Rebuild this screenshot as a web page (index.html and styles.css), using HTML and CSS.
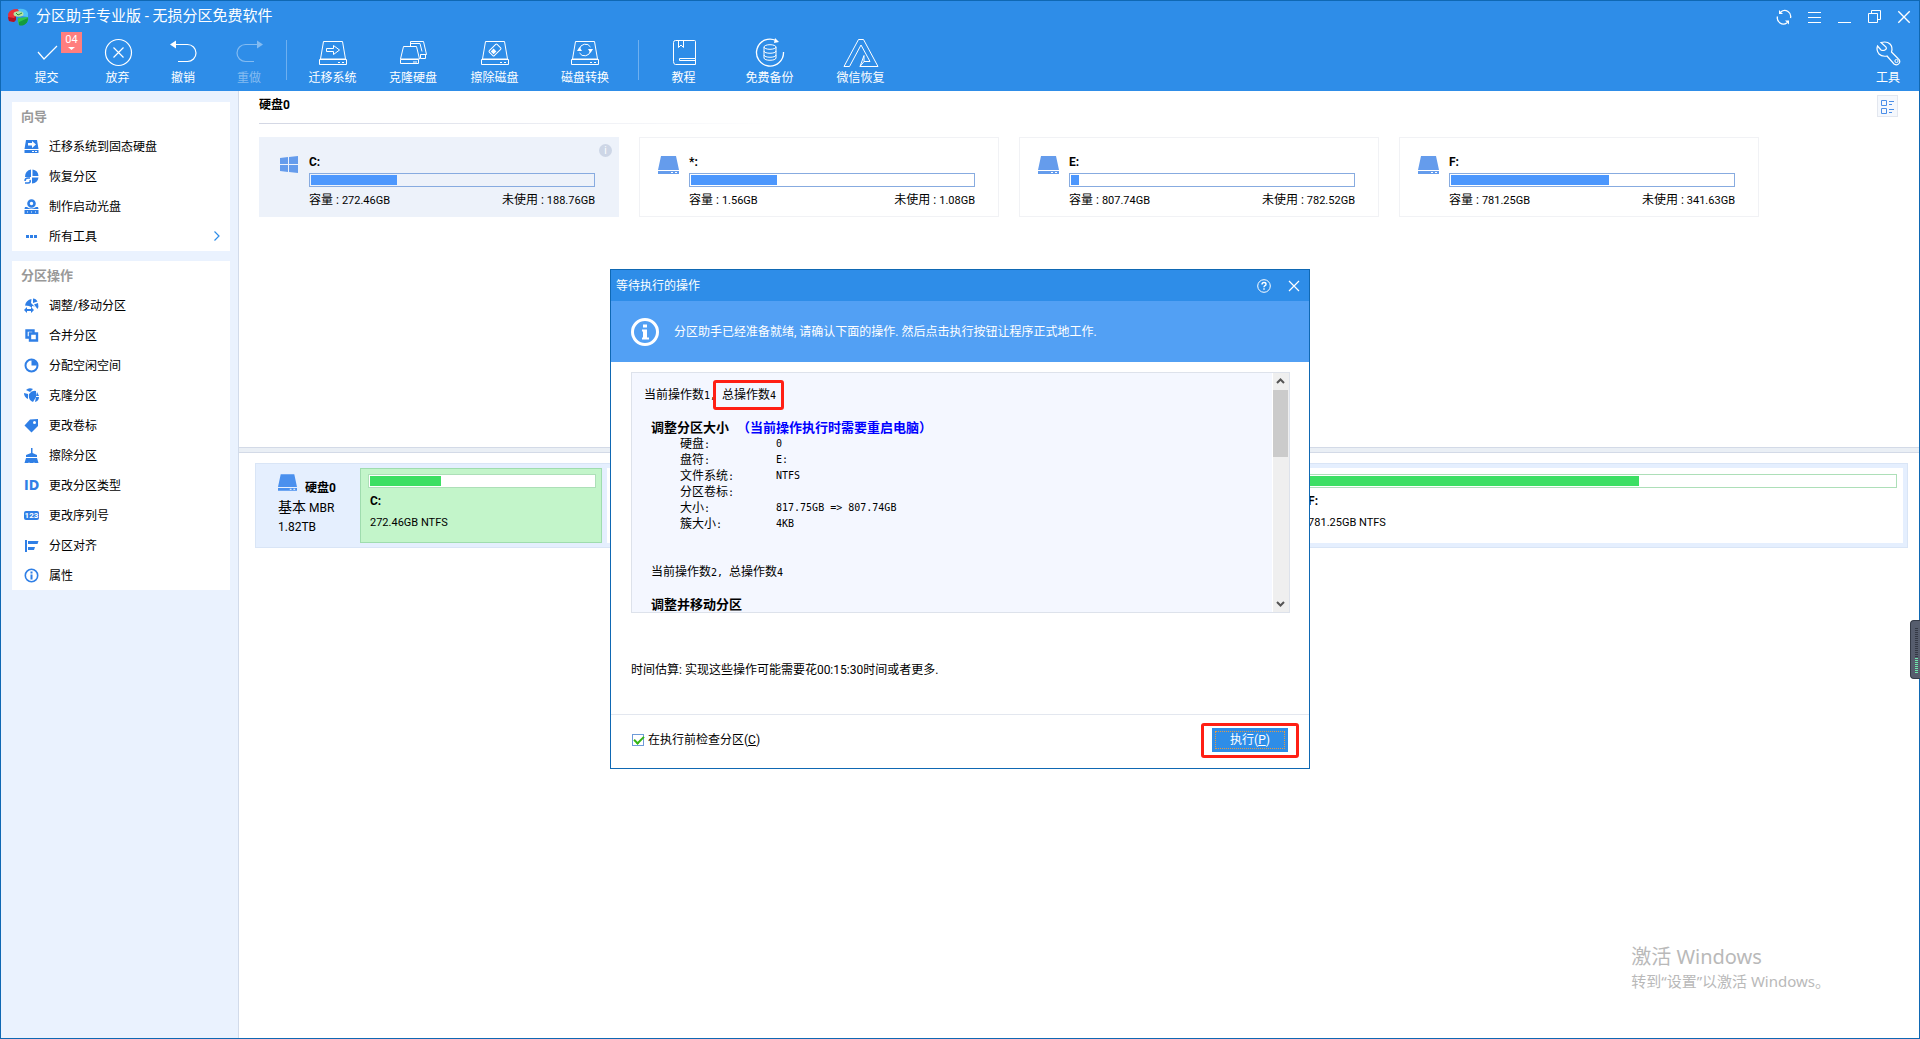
FILE: index.html
```html
<!DOCTYPE html>
<html lang="zh-CN">
<head>
<meta charset="utf-8">
<title>分区助手专业版 - 无损分区免费软件</title>
<link rel="stylesheet" href="styles.css">
</head>
<body>
<svg class="defs" aria-hidden="true">
  <symbol id="disk-line" viewBox="0 0 30 30"><g fill="none" stroke="currentColor"><path d="M5.500 3.500h19l3 17.500h-25zM1.500 21.500h27v5h-27zM20 24.500h2M24 24.500h2"/></g></symbol>
  <symbol id="disk-solid" viewBox="0 0 21 18"><path fill="currentColor" d="M3 0h15l3 14H0zM0 15h21v3H0z"/><path fill="#fff" d="M13 16h2v1h-2zM17 16h2v1h-2z"/></symbol>
  <symbol id="close" viewBox="0 0 14 14"><path d="M2 2l10 10M12 2L2 12" fill="none" stroke="currentColor" stroke-width="1.200"/></symbol>
</svg>
<div class="app">
  <header class="header">
    <div class="titlebar">
      <svg class="logo" viewBox="0 0 21 18"><path d="M0 6q2-5 9-5l3 1-4 3v6l-2 3-5-1q-1-3-1-7z" fill="#e8313a"/><path d="M0 9l6 1 2-2v4l-2 2-5-1z" fill="#b01225"/><path d="M10 1q8-1 10 4v4l-7-1z" fill="#51c3f5"/><path d="M10 10l10-1q1 5-3 7-3 2-6 1-2-4-1-7z" fill="#2fc64c"/><path d="M11 14l9-4q0 5-4 7-3 1-5 0z" fill="#149b3d"/><ellipse cx="10.500" cy="6" rx="5" ry="2.800" fill="#b5e3a0"/><path d="M8 5l2 2 4-2" stroke="#278c35" fill="none"/></svg>
      <h1 class="app-title">分区助手专业版 - 无损分区免费软件</h1>
      <nav class="window-controls">
        <button aria-label="刷新"><svg viewBox="0 0 16 16"><g fill="none" stroke="currentColor" stroke-width="1.300"><path d="M5 2.800a6 6 0 0 1 9.500 6.200M11 13.700A6 6 0 0 1 1.500 7.500"/></g><path fill="currentColor" d="M3 1v4h4zM13 15.500v-4H9z"/></svg></button>
        <button aria-label="菜单"><svg viewBox="0 0 16 16"><path d="M2 3.500h13M2 8.500h13M2 13.500h13" stroke="currentColor"/></svg></button>
        <button aria-label="最小化"><svg viewBox="0 0 16 16"><path d="M2 13.500h13" stroke="currentColor"/></svg></button>
        <button aria-label="还原"><svg viewBox="0 0 16 16"><path d="M2.500 4.500h9v9h-9zM5.500 4V1.500h9v9H12" fill="none" stroke="currentColor"/></svg></button>
        <button aria-label="关闭"><svg viewBox="0 0 14 14"><use href="#close"/></svg></button>
      </nav>
    </div>
    <div class="toolbar">
      <button class="tool"><svg viewBox="0 0 30 30"><path d="M6 14l6 7L25 8" fill="none" stroke="currentColor" stroke-width="1.200"/></svg>提交
        <span class="badge">04<svg viewBox="0 0 7 4"><path d="M0 0h7L3.500 3z" fill="#fff"/></svg></span></button>
      <button class="tool"><svg viewBox="0 0 30 30"><g fill="none" stroke="currentColor" stroke-width="1.200"><circle cx="15.500" cy="14.500" r="13"/><path d="M10.500 9.500l10 10M20.500 9.500l-10 10"/></g></svg>放弃</button>
      <button class="tool"><svg viewBox="0 0 30 30"><path d="M7 6.500h12.500a8.500 8.500 0 0 1 0 17H10" fill="none" stroke="currentColor" stroke-width="1.200"/><path d="M2 6.500l6-4v8z" fill="currentColor"/></svg>撤销</button>
      <button class="tool" disabled><svg viewBox="0 0 30 30"><path d="M24 6.500H11.500a8.500 8.500 0 0 0 0 17H20" fill="none" stroke="currentColor" stroke-width="1.200"/><path d="M29 6.500l-6-4v8z" fill="currentColor"/></svg>重做</button>
      <span class="divider divider-end"></span>
      <button class="tool"><svg viewBox="0 0 30 30"><use href="#disk-line"/><path d="M8.500 10.500h7v-3l6 4.500-6 4.500v-3h-7z" fill="none" stroke="currentColor"/></svg>迁移系统</button>
      <button class="tool"><svg viewBox="0 0 30 30"><g fill="none" stroke="currentColor"><path d="M5.500 8.500h13l3 12.500h-19zM2.500 21.500h18v4h-18zM15 24h4M12.500 8V3.500h13l3 13h-6M22.500 16.500h5v4h-5zM12 5.500h10l2 8"/></g></svg>克隆硬盘</button>
      <button class="tool"><svg viewBox="0 0 30 30"><use href="#disk-line"/><g transform="rotate(-45 15 12)"><rect x="9.500" y="8.500" width="11" height="7" rx="1" fill="none" stroke="currentColor"/><path d="M11 10h4v4h-4z" fill="currentColor"/></g></svg>擦除磁盘</button>
      <button class="tool"><svg viewBox="0 0 30 30"><use href="#disk-line"/><path d="M9.500 11a6 6 0 0 1 11-2M20.500 13a6 6 0 0 1-11 2" fill="none" stroke="currentColor"/><path d="M7 13l2.500-4 2.500 4zM18 11h5l-2.500 4z" fill="currentColor"/></svg>磁盘转换</button>
      <span class="divider"></span>
      <button class="tool"><svg viewBox="0 0 30 30"><path d="M26.500 20.500v-17q0-1-1-1h-19q-2 0-2 2v19q0 3 2 3h20v-6h-16v2h16M9.500 3v6.500l2.500-2.500 2.500 2.500V3" fill="none" stroke="currentColor"/></svg>教程</button>
      <button class="tool"><svg viewBox="0 0 30 30"><g fill="none" stroke="currentColor"><path d="M21 2.500A13.500 13.500 0 1 0 28.500 14" stroke-width="1.300"/><ellipse cx="15" cy="9" rx="6" ry="2.300"/><path d="M9 9v11c0 3 12 3 12 0V9M9 13c0 3 12 3 12 0M9 17c0 3 12 3 12 0"/></g><path d="M20 0l4 4-5 1z" fill="currentColor"/></svg>免费备份</button>
      <button class="tool"><svg viewBox="0 0 36 30" class="wide-icon"><path d="M15.500 1.500h5L35 28.500H17l4-5h6L18 7 6.500 28.500H1zM21 17.500v6h6M17 28.500l4-11" fill="none" stroke="currentColor"/></svg>微信恢复</button>
      <button class="tool tool-end"><svg viewBox="0 0 30 30"><path d="M8 4.500l5 4.500q1 2-1 3t-4 0L4.500 8Q3 12 6 16q3 3 8 2l7 8q3 2 5-.500t-1-5L18.500 14Q20 9 17 6T8 4.500z" fill="none" stroke="currentColor" stroke-width="1.200"/><circle cx="23.500" cy="23" r="1.600" fill="none" stroke="currentColor"/></svg>工具</button>
    </div>
  </header>

  <div class="body">
    <aside class="sidebar">
      <section class="panel">
        <h2>向导</h2>
        <a href="#"><svg viewBox="0 0 15 15"><path fill="currentColor" d="M2 1h11l1.500 9H.500zM.500 11h14v3H.500z"/><path fill="#fff" d="M4 4h4V2l4 3.500L8 9V6.500H4zM8 12h2v1H8zM11 12h2v1h-2z"/></svg>迁移系统到固态硬盘</a>
        <a href="#"><svg viewBox="0 0 15 15"><path fill="currentColor" d="M7 .500V8h-6A7 7 0 0 1 7 .500zM8.500.500a7 7 0 0 1 6 6.500h-6zM14.500 8.500A7 7 0 0 1 8 14.500V8.500z"/><path d="M1 12q0-3 3-3h2M6 11q1 3-2 3H1" fill="none" stroke="currentColor" stroke-width="1.500"/></svg>恢复分区</a>
        <a href="#"><svg viewBox="0 0 15 15"><circle cx="7.500" cy="4.500" r="3" fill="none" stroke="currentColor" stroke-width="2.600"/><path fill="currentColor" d="M1 8h2q4 3 9 0h2l.500 2H.500zM.500 11h14v4H.500z"/><path fill="#fff" d="M3 12.500h1v1H3zM7 12.500h1v1H7zM11 12.500h1v1h-1z"/></svg>制作启动光盘</a>
        <a href="#"><svg viewBox="0 0 15 15"><path fill="currentColor" d="M2 6h3v3H2zM6 6h3v3H6zM10 6h3v3h-3z"/></svg>所有工具<svg class="chevron" viewBox="0 0 6 10"><path d="M.500.500L5 5 .500 9.500" fill="none" stroke="currentColor" stroke-width="1.200"/></svg></a>
      </section>
      <section class="panel">
        <h2>分区操作</h2>
        <a href="#"><svg viewBox="0 0 15 15"><path fill="currentColor" d="M1 7.500Q2 2 7.500 1L7 5l4 4q-1-1-3-1v1.500L5 8zM9 .500q3 0 4.500 3L9 5zM14 5q1 4-.500 6L10 6.500zM0 12l3-3v2h4V9l3 3-3 3v-2H3v2z"/></svg>调整/移动分区</a>
        <a href="#"><svg viewBox="0 0 15 15"><path fill="none" stroke="currentColor" stroke-width="2.400" d="M5 9.500H2.500V2.500h7V5M6 5.500h7v7H6z"/></svg>合并分区</a>
        <a href="#"><svg viewBox="0 0 15 15"><circle cx="7.500" cy="7.500" r="6" fill="none" stroke="currentColor" stroke-width="2"/><path fill="currentColor" d="M7.500 2v5.500H13A6 6 0 0 0 7.500 2z"/></svg>分配空闲空间</a>
        <a href="#"><svg viewBox="0 0 15 15"><path fill="currentColor" d="M2 2q3-3 7-1L6 4zM0 5l4 1v5Q0 9 0 5zM5 6q3-4 7-3v6l-3 5q-5-2-4-8zM13 4l2 4h-3zM12 9h3q0 4-4 5z"/></svg>克隆分区</a>
        <a href="#"><svg viewBox="0 0 15 15"><path fill="currentColor" d="M.500 7.500L6 1.500 14 1v7l-6.500 6.500z"/><circle cx="10.500" cy="4.500" r="1.500" fill="#fff"/></svg>更改卷标</a>
        <a href="#"><svg viewBox="0 0 15 15"><path fill="currentColor" d="M7 0h1.500v5L13 7v2H2V7l5-2zM2 10h11l1.500 5h-4l-.500-1-.500 1h-4l-.500-1-.500 1H.500z"/></svg>擦除分区</a>
        <a href="#"><span class="id-icon">ID</span>更改分区类型</a>
        <a href="#"><span class="num-icon">123</span>更改序列号</a>
        <a href="#"><svg viewBox="0 0 15 15"><path fill="currentColor" d="M1 2h2v12H1zM4 3h10.500l-1 3H4zM4 9h7l-1 3H4z"/></svg>分区对齐</a>
        <a href="#"><svg viewBox="0 0 15 15"><circle cx="7.500" cy="7.500" r="6.200" fill="none" stroke="currentColor" stroke-width="1.600"/><path fill="currentColor" d="M6.500 3.500h2v2h-2zM6.500 6.500h2v5h-2z"/></svg>属性</a>
      </section>
    </aside>

    <main class="main">
      <section class="overview">
        <div class="overview-head">
          <h2>硬盘0</h2>
          <button class="view-toggle" aria-label="视图"><svg viewBox="0 0 15 15"><path d="M1.500 1.500h5v5h-5zM1.500 9.500h5v5h-5z" fill="none" stroke="currentColor"/><path d="M9 2.500h5M9 5.500h3M9 10.500h5M9 13.500h3" stroke="currentColor"/></svg></button>
        </div>
        <div class="volumes">
          <article class="volume selected">
            <svg class="volume-icon" viewBox="0 0 21 18"><path fill="currentColor" d="M2 2l8-1v7H2zM11 1l9-1v8h-9zM2 9h8v7l-8-1zM11 9h9v8l-9-1z"/></svg>
            <div class="volume-info"><h3>C:</h3><div class="bar"><i style="width:86px"></i></div><p><span>容量 : <span class="latin">272.46GB</span></span><span>未使用 : <span class="latin">188.76GB</span></span></p></div>
            <span class="info-dot">i</span>
          </article>
          <article class="volume">
            <svg class="volume-icon"><use href="#disk-solid"/></svg>
            <div class="volume-info"><h3>*:</h3><div class="bar"><i style="width:86px"></i></div><p><span>容量 : <span class="latin">1.56GB</span></span><span>未使用 : <span class="latin">1.08GB</span></span></p></div>
          </article>
          <article class="volume">
            <svg class="volume-icon"><use href="#disk-solid"/></svg>
            <div class="volume-info"><h3>E:</h3><div class="bar"><i style="width:8px"></i></div><p><span>容量 : <span class="latin">807.74GB</span></span><span>未使用 : <span class="latin">782.52GB</span></span></p></div>
          </article>
          <article class="volume">
            <svg class="volume-icon"><use href="#disk-solid"/></svg>
            <div class="volume-info"><h3>F:</h3><div class="bar"><i style="width:158px"></i></div><p><span>容量 : <span class="latin">781.25GB</span></span><span>未使用 : <span class="latin">341.63GB</span></span></p></div>
          </article>
        </div>
      </section>
      <div class="splitter"></div>
      <section class="map">
        <div class="disk-row">
          <div class="disk-info">
            <div class="disk-name"><svg><use href="#disk-solid"/></svg><b>硬盘0</b></div>
            <div><span class="disk-kind">基本</span> MBR</div>
            <div>1.82TB</div>
          </div>
          <div class="partition active"><div class="bar green"><i style="width:71px"></i></div><h3>C:</h3><p>272.46GB NTFS</p></div>
          <div class="partition middle"></div>
          <div class="partition last"><div class="bar green"><i style="width:331px"></i></div><h3>F:</h3><p>781.25GB NTFS</p></div>
        </div>
      </section>
    </main>
  </div>
  <div class="watermark"><strong>激活 Windows</strong><span>转到“设置”以激活 Windows。</span></div>
  <div class="side-meter"><i class="off"></i><i class="on"></i></div>
</div>

<div class="overlay">
  <div class="dialog" role="dialog" aria-labelledby="dialog-title">
    <div class="dialog-title">
      <h2 id="dialog-title">等待执行的操作</h2>
      <button aria-label="帮助"><svg viewBox="0 0 14 14"><circle cx="7" cy="7" r="6.300" fill="none" stroke="currentColor"/><path d="M5 5.500q0-2 2-2t2 1.700q0 1-1 1.500t-1 1.500M7 9.300v1.500" fill="none" stroke="currentColor" stroke-width="1.400"/></svg></button>
      <button aria-label="关闭"><svg viewBox="0 0 14 14"><use href="#close"/></svg></button>
    </div>
    <div class="banner">
      <svg viewBox="0 0 28 28"><circle cx="14" cy="14" r="12.500" fill="none" stroke="#fff" stroke-width="3"/><path fill="#fff" d="M12 6.500h4v3h-4zM11 11.500h5v8h2v2h-7v-2h1v-6h-1z"/></svg>
      <p>分区助手已经准备就绪, 请确认下面的操作. 然后点击执行按钮让程序正式地工作.</p>
    </div>
    <div class="dialog-body">
      <div class="report">
        <div class="report-text">
          <p class="first">当前操作数<span class="mono">1,</span><span class="count marked">总操作数<span class="mono">4</span></span></p>
          <h3>调整分区大小<em>（当前操作执行时需要重启电脑）</em></h3>
          <dl>
            <dt>硬盘<span class="mono">:</span></dt><dd>0</dd>
            <dt>盘符<span class="mono">:</span></dt><dd>E:</dd>
            <dt>文件系统<span class="mono">:</span></dt><dd>NTFS</dd>
            <dt>分区卷标<span class="mono">:</span></dt><dd></dd>
            <dt>大小<span class="mono">:</span></dt><dd>817.75GB =&gt; 807.74GB</dd>
            <dt>簇大小<span class="mono">:</span></dt><dd>4KB</dd>
          </dl>
          <p>当前操作数<span class="mono">2,</span><span class="count">总操作数<span class="mono">4</span></span></p>
          <h3>调整并移动分区</h3>
        </div>
        <div class="scrollbar">
          <button aria-label="向上滚动"><svg viewBox="0 0 9 7"><path d="M1 5l3.500-3.500L8 5" fill="none" stroke="currentColor" stroke-width="2"/></svg></button>
          <span class="thumb"></span>
          <button aria-label="向下滚动"><svg viewBox="0 0 9 7"><path d="M1 2l3.500 3.500L8 2" fill="none" stroke="currentColor" stroke-width="2"/></svg></button>
        </div>
      </div>
      <p class="estimate">时间估算: 实现这些操作可能需要花00:15:30时间或者更多.</p>
    </div>
    <div class="dialog-foot">
      <label><input type="checkbox" checked>在执行前检查分区(<u>C</u>)</label>
      <div class="marked run-mark"><button class="run">执行(<u>P</u>)</button></div>
    </div>
  </div>
</div>
</body>
</html>
```
FILE: styles.css
```css
* { box-sizing: border-box; }
body, h1, h2, h3, p, dl, dd { margin: 0; }
body {
  font: 12px/16px Roboto, "Noto Sans CJK SC", sans-serif;
  color: #000;
  background: #fff;
}
button {
  margin: 0; padding: 0; border: 0;
  background: none; color: inherit; font: inherit;
}
h2, h3 { font-size: 12px; line-height: 16px; }
svg { display: block; flex: none; }
.defs { position: absolute; width: 0; height: 0; }
.latin { font-size: 11px; }

.app {
  position: relative;
  display: flex;
  flex-direction: column;
  min-height: 100vh;
  border: 1px solid #0f68b3;
}

/* Header */
.header { background: #2e8de8; color: #fff; }
.titlebar { display: flex; align-items: center; height: 31px; padding-left: 7px; }
.logo { width: 21px; height: 18px; }
.app-title { flex: 1; margin-left: 7px; padding-bottom: 2px; font-size: 15px; font-weight: 400; line-height: 20px; }
.window-controls { display: flex; }
.window-controls button { display: grid; place-items: center; width: 30px; height: 30px; }
.window-controls svg { width: 16px; height: 16px; }
.toolbar {
  display: grid;
  grid-template-columns: 91px 51px 80px 52px 12px 91px 70px 93px 88px 18px 73px 99px 83px 1fr;
  height: 59px;
  padding: 6px 13px 0 0;
}
.tool {
  position: relative;
  display: flex;
  flex-direction: column;
  align-items: center;
  height: 49px;
  line-height: 18px;
  white-space: nowrap;
}
.tool > svg { width: 30px; height: 30px; margin-bottom: 1px; }
.tool > .wide-icon { width: 36px; }
.tool:disabled { color: #83bbf1; }
.tool-end { justify-self: end; width: 36px; }
.divider { justify-self: center; width: 1px; height: 40px; margin-top: 2px; background: #6eb0f0; }
.divider-end { justify-self: end; }
.badge {
  position: absolute;
  left: 60px;
  top: -6px;
  display: flex;
  flex-direction: column;
  align-items: center;
  width: 21px;
  height: 21px;
  background: #ff7e7e;
  font-size: 11px;
  line-height: 15px;
}
.badge svg { width: 7px; height: 4px; }

/* Sidebar */
.body { display: flex; flex: 1; }
.sidebar {
  display: flex;
  flex-direction: column;
  gap: 10px;
  width: 238px;
  padding: 11px 8px 11px 11px;
  background: #eaf2fe;
  border-right: 1px solid #d2dbea;
}
.panel { background: #fff; }
.panel h2 { padding-left: 9px; color: #999; font-size: 13px; line-height: 29px; }
.panel a {
  display: flex;
  align-items: center;
  height: 30px;
  padding: 2px 10px 0 12px;
  color: #000;
  text-decoration: none;
}
.panel a > :first-child { margin: 0 10px 2px 0; }
.panel a > svg:first-child { width: 15px; height: 15px; color: #2f7fe6; }
.panel a > .chevron { width: 6px; height: 10px; margin: 0 0 2px auto; color: #2e8de8; }
.id-icon, .num-icon { width: 15px; text-align: center; }
.id-icon { color: #2f7fe6; font: bold 14px/16px "DejaVu Sans Condensed", sans-serif; }
.num-icon { background: #2f7fe6; color: #fff; border-radius: 2px; font: bold 8px/9px Roboto, sans-serif; }

/* Volume overview */
.main { flex: 1; min-width: 0; }
.overview { height: 356px; padding: 4px 21px 0 20px; }
.overview-head {
  display: flex;
  justify-content: space-between;
  height: 29px;
  background: linear-gradient(to right, #d3d7e4, #fff) 0 100% / 520px 1px no-repeat;
}
.overview-head h2 { line-height: 20px; }
.view-toggle {
  display: grid;
  place-items: center;
  width: 21px;
  height: 22px;
  border: 1px solid #e3e7ef;
  background: #f5f8fd;
  color: #4a8ee8;
}
.view-toggle svg { width: 15px; height: 15px; }
.volumes { display: flex; gap: 20px; padding-top: 13px; }
.volume {
  position: relative;
  display: flex;
  width: 360px;
  height: 80px;
  padding: 16px 23px 0 18px;
  border: 1px solid #f1f2f5;
}
.volume.selected { background: #edf2fa; border-color: #edf2fa; }
.volume-icon { width: 21px; height: 18px; margin: 2px 10px 0 0; color: #659cec; }
.volume-info { flex: 1; }
.volume h3 { margin-bottom: 3px; }
.volume p { display: flex; justify-content: space-between; margin-top: 5px; }
.bar { height: 14px; padding: 1px; border: 1px solid #87abe0; }
.bar i { display: block; height: 10px; background: #4c97fd; }
.info-dot {
  position: absolute;
  top: 6px;
  right: 6px;
  width: 13px;
  height: 13px;
  border-radius: 50%;
  background: #cdd6e6;
  color: #fff;
  font-size: 10px;
  line-height: 13px;
  text-align: center;
}

/* Disk map */
.splitter { height: 6px; background: #eaeff5; border: solid #d3dae7; border-width: 1px 0; }
.map { padding: 10px 11px 0 16px; }
.disk-row {
  display: flex;
  gap: 5px;
  height: 85px;
  padding: 4px;
  border: 1px solid #d9e5f6;
  background: #e5effe;
}
.disk-info { width: 95px; padding: 6px 0 0 18px; line-height: 19px; }
.disk-name { display: flex; gap: 8px; padding-bottom: 2px; }
.disk-name svg { width: 19px; height: 17px; color: #4a90ee; }
.disk-name b { padding-top: 6px; line-height: 16px; }
.disk-kind { font-size: 14px; }
.partition { padding: 6px 6px 0 8px; background: #fff; }
.partition.active { width: 242px; padding: 5px 5px 0 7px; border: 1px solid #9fdcae; background: #c3f5ca; }
.partition.middle { flex: 687 0 0; }
.partition.last { flex: 604 0 0; }
.partition h3 { margin: 5px 0 6px 2px; }
.partition p { margin-left: 2px; font-size: 11px; }
.bar.green { border-color: #addfb8; background: #fff; }
.bar.green i { background: #3cdf63; }

.watermark {
  position: absolute;
  right: 89px;
  bottom: 47px;
  display: flex;
  flex-direction: column;
  color: #b9b9b9;
  font: 15px/20px "Noto Sans", "Noto Sans CJK SC", sans-serif;
}
.watermark strong { font-size: 20px; font-weight: 400; line-height: 28px; }
.side-meter {
  position: absolute;
  right: -1px;
  top: 619px;
  width: 10px;
  height: 59px;
  padding: 7px 2px 0 4px;
  border: solid #343a46;
  border-width: 1px 0 1px 1px;
  border-radius: 4px 0 0 4px;
  background: #565d6d;
}
.side-meter i { display: block; }
.side-meter .off { height: 30px; background: repeating-linear-gradient(#343944 0 1px, #565d6d 1px 2px); }
.side-meter .on { height: 16px; background: repeating-linear-gradient(#6ee8ac 0 1px, #565d6d 1px 2px); }

/* Pending operations dialog */
.overlay { position: fixed; inset: 0; display: grid; place-items: center; padding-bottom: 1px; }
.dialog { width: 700px; border: 1px solid #0f68b3; background: #fff; }
.dialog-title { display: flex; align-items: center; height: 31px; padding-left: 5px; background: #2e8de8; color: #fff; }
.dialog-title h2 { flex: 1; font-weight: 400; }
.dialog-title button { display: grid; place-items: center; width: 30px; height: 29px; }
.dialog-title svg { width: 14px; height: 14px; }
.banner { display: flex; align-items: center; gap: 15px; height: 61px; padding-left: 20px; background: #52a0f4; color: #fff; }
.banner svg { width: 28px; height: 28px; }
.dialog-body { height: 352px; padding: 10px 19px 0 20px; }
.report { display: flex; height: 241px; border: 1px solid #dde2eb; background: #f4f7ff; }
.report-text { flex: 1; padding: 14px 0 0 19px; overflow: hidden; }
.report-text .first { margin: 0 0 16px -7px; }
.report-text h3 { font-size: 13px; }
.report-text em { margin-left: 8px; color: #00f; font-style: normal; }
.mono, .report dd { font-family: "DejaVu Sans Mono", monospace; font-size: 10px; }
.report dl { display: grid; grid-template-columns: 96px 1fr; grid-auto-rows: 16px; padding: 0 0 32px 29px; }
.report-text p { margin-bottom: 16px; }
.count { display: inline-block; margin-left: 6px; }
.marked { position: relative; }
.marked::after {
  content: "";
  position: absolute;
  inset: -7px -8px -6px -9px;
  border: 3px solid #ff1f14;
  border-radius: 3px;
  pointer-events: none;
}
.scrollbar {
  display: flex;
  flex-direction: column;
  width: 17px;
  border-left: 1px solid #fff;
  background: #efefef;
}
.scrollbar button { display: grid; place-items: center; width: 15px; height: 17px; color: #555; }
.scrollbar button:last-child { margin-top: auto; }
.scrollbar svg { width: 9px; height: 7px; }
.thumb { width: 15px; height: 67px; background: #cbcbcb; }
.estimate { margin-top: 49px; }
.dialog-foot {
  display: flex;
  align-items: center;
  justify-content: space-between;
  height: 54px;
  padding: 0 21px 3px;
  border-top: 1px solid #e3e7ef;
}
.dialog-foot label { display: flex; align-items: center; }
.dialog-foot input {
  appearance: none;
  width: 12px;
  height: 12px;
  margin: 0 4px 0 0;
  border: 1px solid #6d9bd8;
  background: #fff;
}
.dialog-foot input:checked::before {
  content: "";
  display: block;
  width: 8px;
  height: 4px;
  margin: 1px;
  border: solid #35b515;
  border-width: 0 0 2px 2px;
  transform: rotate(-45deg);
}
.run { display: block; width: 76px; height: 24px; background: #2e8de8; color: #fff; outline: 1px dotted #e59a45; outline-offset: -4px; }
.run-mark::after { inset: -5px -11px -6px; }
```
